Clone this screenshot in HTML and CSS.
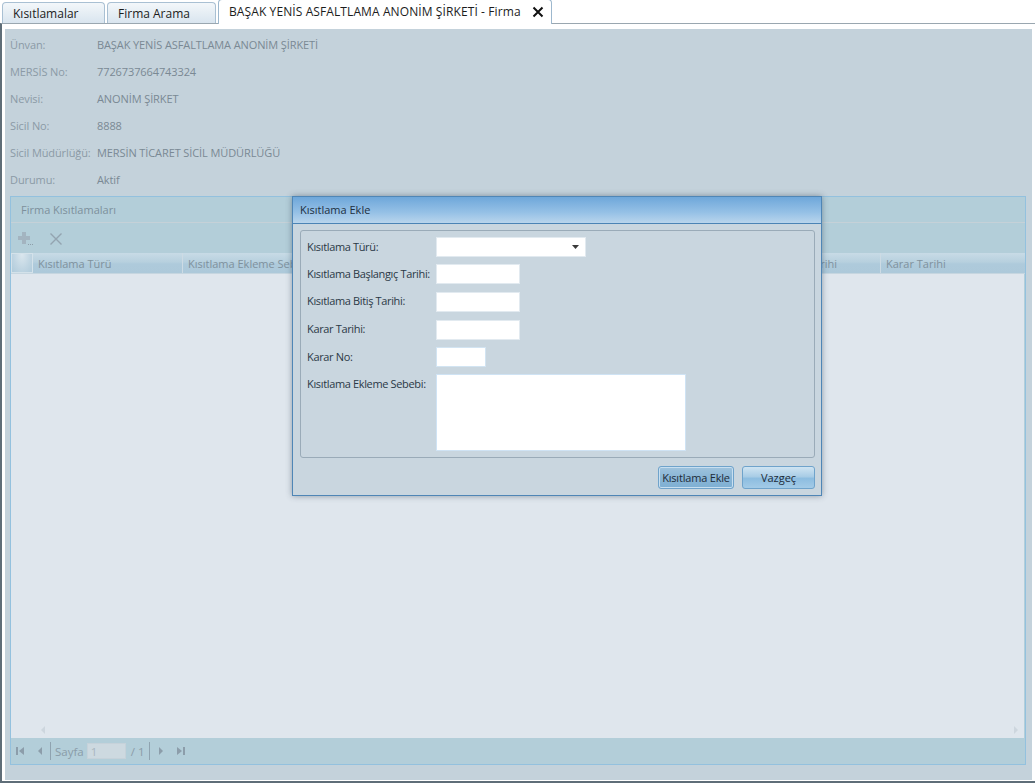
FILE: index.html
```html
<!DOCTYPE html>
<html lang="tr">
<head>
  <meta charset="UTF-8">
  <title>Firma Kısıtlamaları</title>
  <link rel="stylesheet" href="styles.css">
</head>
<body>
  <div class="tabbar">
    <div class="tab">Kısıtlamalar</div>
    <div class="tab">Firma Arama</div>
    <div class="tab active">
      <span>BAŞAK YENİS ASFALTLAMA ANONİM ŞİRKETİ - Firma</span>
      <svg class="tab-close" width="12" height="12" viewBox="0 0 12 12"><path d="M1.5 1.5 L10.5 10.5 M10.5 1.5 L1.5 10.5" stroke="#111" stroke-width="2"/></svg>
    </div>
  </div>

  <div class="frame">
    <div class="page">
      <div class="info">
        <div class="info-row"><span class="info-label">Ünvan:</span><span class="info-value">BAŞAK YENİS ASFALTLAMA ANONİM ŞİRKETİ</span></div>
        <div class="info-row"><span class="info-label">MERSİS No:</span><span class="info-value">7726737664743324</span></div>
        <div class="info-row"><span class="info-label">Nevisi:</span><span class="info-value">ANONİM ŞİRKET</span></div>
        <div class="info-row"><span class="info-label">Sicil No:</span><span class="info-value">8888</span></div>
        <div class="info-row"><span class="info-label">Sicil Müdürlüğü:</span><span class="info-value">MERSİN TİCARET SİCİL MÜDÜRLÜĞÜ</span></div>
        <div class="info-row"><span class="info-label">Durumu:</span><span class="info-value">Aktif</span></div>
      </div>

      <div class="panel">
        <div class="panel-header">Firma Kısıtlamaları</div>
        <div class="toolbar">
          <span class="tool">
            <svg width="18" height="16" viewBox="0 0 18 16">
              <path d="M5 1 H9 V5 H13 V9 H9 V13 H5 V9 H1 V5 H5 Z" fill="#a3b4c0"/>
              <rect x="11" y="13" width="1" height="1" fill="#8d9eaa"/>
              <rect x="13" y="13" width="1" height="1" fill="#8d9eaa"/>
              <rect x="15" y="13" width="1" height="1" fill="#8d9eaa"/>
            </svg>
          </span>
          <span class="tool">
            <svg width="14" height="14" viewBox="0 0 14 14"><path d="M1.5 1.5 L12.5 12.5 M12.5 1.5 L1.5 12.5" stroke="#93a4b0" stroke-width="1.4"/></svg>
          </span>
        </div>
        <div class="grid-head">
          <div class="col col-check"></div>
          <div class="col col-tur">Kısıtlama Türü</div>
          <div class="col col-sebep">Kısıtlama Ekleme Sebebi</div>
          <div class="col col-bas">Kısıtlama Başlangıç Tarihi</div>
          <div class="col col-bit">Kısıtlama Bitiş Tarihi</div>
          <div class="col col-karar">Karar Tarihi</div>
        </div>
        <div class="grid-body">
          <div class="hscroll">
            <span class="arrow-left"></span>
            <span class="arrow-right"></span>
          </div>
        </div>
        <div class="pager">
          <span class="pg-icon pg-first">
            <svg width="10" height="10" viewBox="0 0 10 10"><rect x="1" y="1" width="2" height="8" fill="#8c9daa"/><path d="M9 1 V9 L4 5 Z" fill="#8c9daa"/></svg>
          </span>
          <span class="pg-icon pg-prev">
            <svg width="10" height="10" viewBox="0 0 10 10"><path d="M7 1 V9 L3 5 Z" fill="#8c9daa"/></svg>
          </span>
          <span class="pg-sep"></span>
          <span class="pg-text pg-label">Sayfa</span>
          <span class="pg-input">1</span>
          <span class="pg-text pg-total">/ 1</span>
          <span class="pg-sep pg-sep2"></span>
          <span class="pg-icon pg-next">
            <svg width="10" height="10" viewBox="0 0 10 10"><path d="M3 1 V9 L7 5 Z" fill="#8c9daa"/></svg>
          </span>
          <span class="pg-icon pg-last">
            <svg width="10" height="10" viewBox="0 0 10 10"><path d="M1 1 V9 L6 5 Z" fill="#8c9daa"/><rect x="7" y="1" width="2" height="8" fill="#8c9daa"/></svg>
          </span>
        </div>
      </div>
    </div>
  </div>

  <!-- modal window over the masked page -->
  <div class="modal">
    <div class="modal-title">Kısıtlama Ekle</div>
    <div class="modal-body">
      <div class="fieldset">
        <div class="field">
          <label>Kısıtlama Türü:</label>
          <div class="input select">
            <svg width="7" height="4" viewBox="0 0 7 4"><path d="M0 0 H7 L3.5 4 Z" fill="#3a3a3a"/></svg>
          </div>
        </div>
        <div class="field">
          <label>Kısıtlama Başlangıç Tarihi:</label>
          <div class="input date"></div>
        </div>
        <div class="field">
          <label>Kısıtlama Bitiş Tarihi:</label>
          <div class="input date"></div>
        </div>
        <div class="field">
          <label>Karar Tarihi:</label>
          <div class="input date"></div>
        </div>
        <div class="field">
          <label>Karar No:</label>
          <div class="input short"></div>
        </div>
        <div class="field">
          <label>Kısıtlama Ekleme Sebebi:</label>
          <div class="input textarea"></div>
        </div>
      </div>
      <div class="modal-buttons">
        <button class="btn btn-focus">Kısıtlama Ekle</button>
        <button class="btn">Vazgeç</button>
      </div>
    </div>
  </div>
</body>
</html>
```

FILE: styles.css
```css
body {
  margin: 0;
  font-family: "Open Sans", "Noto Sans", sans-serif;
  font-size: 11px;
  background-color: #fff;
  position: relative;
  width: 1035px;
  height: 784px;
  overflow: hidden;
}

/* tabs */
.tabbar {
  height: 23px;
  display: flex;
  align-items: flex-end;
  padding-left: 2px;
  gap: 2px;
}
.tab {
  height: 20px;
  line-height: 21px;
  padding: 0 10px;
  font-size: 12px;
  color: #1c1c1c;
  white-space: nowrap;
  border: 1px solid #a9c0d3;
  border-bottom: none;
  border-radius: 4px 4px 0 0;
  background: linear-gradient(#f3f7fa, #d9e5ef);
}
.tab:nth-child(1) { width: 81px; }
.tab:nth-child(2) { width: 87px; }
.tab.active {
  height: 24px;
  line-height: 22px;
  background: #fff;
  border-color: #9db8ce;
  display: flex;
  align-items: center;
  margin-bottom: -1px;
  position: relative;
  z-index: 2;
  width: 312px;
  letter-spacing: 0.1px;
}
.tab-close {
  margin-left: auto;
  margin-right: -3px;
}

/* frame with masked page */
.frame {
  border-top: 1px solid #9aa7b0;
  border-left: 2px solid #5f6e78;
  border-bottom: 2px solid #5f6e78;
  padding: 5px 3px 1px 3px;
}
.page {
  background-color: #c4d2db;
  height: 751px;
  padding-top: 2px;
  box-sizing: border-box;
}
.info-row {
  height: 27px;
  line-height: 27px;
  padding-left: 5px;
  display: flex;
  letter-spacing: -0.1px;
}
.info-label {
  width: 87px;
  color: #8b9aa6;
  white-space: nowrap;
}
.info-value {
  color: #7a8994;
}

.panel {
  margin: 3px 6px 0 5px;
  border: 1px solid #93c1de;
  background-color: #b3ced9;
  display: flex;
  flex-direction: column;
}
.panel-header {
  height: 25px;
  line-height: 25px;
  padding-left: 10px;
  color: #7d909c;
  border-bottom: 1px solid #c5d1d8;
}
.toolbar {
  height: 30px;
  display: flex;
  align-items: center;
  padding-left: 6px;
  gap: 14px;
}
.tool {
  display: flex;
  padding-top: 2px;
}
.grid-head {
  height: 21px;
  display: flex;
  background: linear-gradient(#c8dbe6 0%, #b7d0de 45%, #aecadb 55%, #adc9da 100%);
  border-bottom: 1px solid #c6d6e0;
  box-sizing: border-box;
}
.col {
  line-height: 21px;
  padding-left: 5px;
  color: #7f919d;
  border-right: 1px solid #cddbe4;
  white-space: nowrap;
  overflow: hidden;
  box-sizing: border-box;
}
.col-check {
  width: 22px;
  padding: 0;
  border: 1px solid #d4e2ea;
  background: radial-gradient(ellipse at 50% 0%, #dbe7ee 0%, #c0d5e2 60%, #b0cbdb 100%);
}
.col-tur { width: 150px; }
.col-sebep { width: 250px; }
.col-bas { width: 296px; }
.col-bit { width: 152px; }
.col-karar { flex: 1; border-right: none; }

.grid-body {
  height: 464px;
  background-color: #dfe6ed;
  margin-right: 1px;
  display: flex;
  flex-direction: column;
  justify-content: flex-end;
}
.hscroll {
  height: 16px;
  display: flex;
  justify-content: space-between;
  align-items: center;
  padding: 0 6px 0 30px;
}
.arrow-left {
  border-right: 4px solid #cdd6de;
  border-top: 4px solid transparent;
  border-bottom: 4px solid transparent;
}
.arrow-right {
  border-left: 4px solid #cdd6de;
  border-top: 4px solid transparent;
  border-bottom: 4px solid transparent;
}

.pager {
  height: 26px;
  display: flex;
  align-items: center;
  padding-left: 4px;
  color: #8a9ca8;
}
.pg-icon {
  display: flex;
}
.pg-prev { margin-left: 10px; }
.pg-sep {
  width: 1px;
  height: 18px;
  margin-left: 5px;
  background-color: #8fa3b0;
}
.pg-text {
  font-size: 11.5px;
}
.pg-label { margin-left: 4px; }
.pg-input {
  width: 39px;
  height: 16px;
  line-height: 16px;
  margin-left: 3px;
  padding-left: 3px;
  background-color: #cdd9e0;
  border: 1px solid #c6d2da;
  color: #a8b6bf;
  font-size: 11.5px;
  box-sizing: border-box;
}
.pg-total { margin-left: 5px; }
.pg-sep2 { margin-left: 4px; }
.pg-next { margin-left: 6px; }
.pg-last { margin-left: 10px; }

/* modal window */
.modal {
  position: absolute;
  left: 292px;
  top: 196px;
  width: 530px;
  height: 300px;
  box-sizing: border-box;
  border: 1px solid #4f86b6;
  background-color: #c9d6df;
  box-shadow: 0 0 6px rgba(40, 60, 80, 0.45);
}
.modal-title {
  height: 26px;
  line-height: 26px;
  padding-left: 7px;
  color: #1d2f3f;
  background: linear-gradient(#6ea7da, #96c1e6 60%, #b9d5ec);
  border-bottom: 1px solid #4b84b5;
}
.modal-body {
  padding: 6px 6px 0 7px;
}
.fieldset {
  height: 228px;
  box-sizing: border-box;
  border: 1px solid #9aabb8;
  border-radius: 3px;
  padding: 6px 0 0 6px;
  display: flex;
  flex-direction: column;
  gap: 7px;
}
.field {
  display: flex;
  color: #2b3946;
}
.field label {
  width: 129px;
  line-height: 20px;
  white-space: nowrap;
  letter-spacing: -0.35px;
}
.input {
  height: 20px;
  background-color: #fff;
  border: 1px solid #e2eaf0;
  box-sizing: border-box;
}
.select {
  width: 150px;
  display: flex;
  align-items: center;
  justify-content: flex-end;
  padding-right: 6px;
}
.date {
  width: 84px;
}
.field:nth-child(3) .date,
.field:nth-child(4) .date {
  margin-top: 1px;
}
.short {
  width: 50px;
  border-color: #d2e4f2;
}
.textarea {
  width: 250px;
  height: 77px;
  border-color: #cfe3f4;
}

.modal-buttons {
  display: flex;
  justify-content: flex-end;
  gap: 8px;
  padding-top: 8px;
}
.btn {
  height: 23px;
  font-family: inherit;
  font-size: 11px;
  color: #1d2b38;
  border: 1px solid #6fa3cb;
  border-radius: 3px;
  background: linear-gradient(#cfe4f2 0%, #a9cde6 45%, #8dbde0 55%, #a3cbe7 100%);
  padding: 0;
}
.btn-focus {
  width: 76px;
  letter-spacing: -0.2px;
  background: linear-gradient(#9fc3dd 0%, #8ab6d6 50%, #7eafd3 100%);
  box-shadow: inset 0 0 0 1px #c8dff0;
}
.btn:last-child {
  width: 73px;
}
```
